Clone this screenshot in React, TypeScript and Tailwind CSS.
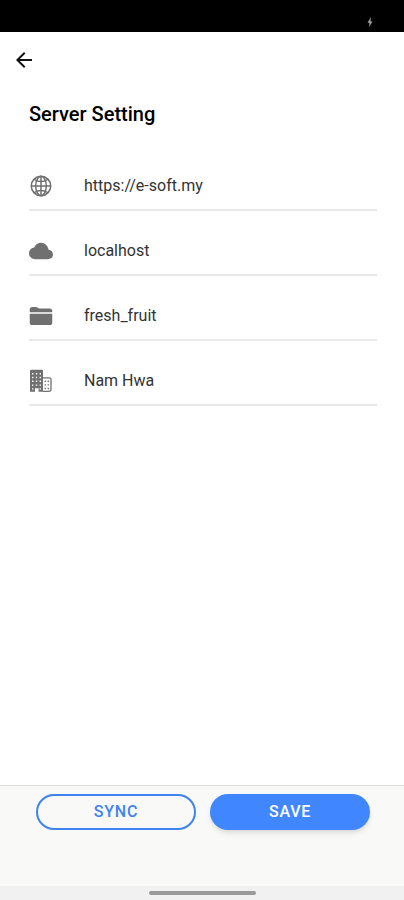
import type { ReactNode } from "react";
import { MdArrowBack } from "react-icons/md";
import { IoCloud, IoFolder, IoGlobeOutline } from "react-icons/io5";

function BusinessIcon() {
  return (
    <svg viewBox="0 0 24 24" className="size-6" fill="currentColor" aria-hidden="true">
      <path
        fillRule="evenodd"
        d="M2.2.8h10.6A1.2 1.2 0 0 1 14 2v20.8H9.6v-3.6H6v3.6H1V2A1.2 1.2 0 0 1 2.200.8ZM3 4v1.4h1.4V4Zm3.800 0v1.4h1.400V4Zm3.800 0v1.400H12V4ZM3 7.800v1.400h1.400V7.800Zm3.800 0v1.400h1.400V7.800Zm3.800 0v1.400H12V7.800ZM3 11.600V13h1.400v-1.400Zm3.800 0V13h1.400v-1.400Zm3.800 0V13H12v-1.400ZM3 15.400v1.400h1.400v-1.400Zm3.800 0v1.400h1.400v-1.400Zm3.800 0v1.400H12v-1.400ZM3 19.200v1.400h1.400v-1.400Zm7.600 0v1.400H12v-1.400Z"
      />
      <path
        d="M14 8.800h6.200a1.800 1.800 0 0 1 1.800 1.800v10a1.800 1.800 0 0 1-1.800 1.800H14"
        fill="none"
        stroke="currentColor"
        strokeWidth="1.3"
      />
      <path d="M15.600 11.600H17V13h-1.400Zm3 0H20V13h-1.400Zm-3 3.600H17v1.400h-1.400Zm3 0H20v1.400h-1.400Zm-3 3.600H17v1.400h-1.400Zm3 0H20v1.400h-1.400Z" />
    </svg>
  );
}

type FieldProps = { id: string; label: string; value: string; icon: ReactNode };

const fields: FieldProps[] = [
  { id: "url", label: "Server URL", value: "https://e-soft.my", icon: <IoGlobeOutline className="size-6" /> },
  { id: "host", label: "Host", value: "localhost", icon: <IoCloud className="size-6" /> },
  { id: "database", label: "Database", value: "fresh_fruit", icon: <IoFolder className="size-6" /> },
  { id: "company", label: "Company", value: "Nam Hwa", icon: <BusinessIcon /> },
];

function Field({ id, label, value, icon }: FieldProps) {
  return (
    <div className="flex h-[65px] items-center border-b-2 border-[#e9e9e9] pt-4">
      <label htmlFor={id} aria-label={label} className="flex w-[55px] shrink-0 text-[#707070]">
        {icon}
      </label>
      <input
        id={id}
        type="text"
        defaultValue={value}
        className="h-6 min-w-0 flex-1 bg-transparent text-base leading-6 text-[#333] outline-none"
      />
    </div>
  );
}

export default function App() {
  return (
    <div className="flex min-h-screen flex-col bg-white font-['Roboto',sans-serif]">
      <div className="flex h-8 items-end justify-end bg-black px-7 pb-1">
        <svg viewBox="0 0 12 12" className="size-3" fill="#a3a3a3" aria-hidden="true">
          <path d="M7 1 3.5 6.8h2L5 11l3.500-5.600h-2Z" />
        </svg>
      </div>
      <header className="flex h-14 items-center px-3">
        <button type="button" aria-label="Back" className="flex text-[#111]">
          <MdArrowBack className="size-6" />
        </button>
      </header>
      <main className="flex-1 pr-[27px] pl-[29px]">
        <h1 className="mt-2.5 mb-4 text-xl leading-8 font-medium text-black">Server Setting</h1>
        <form>
          {fields.map((field) => (
            <Field key={field.id} {...field} />
          ))}
        </form>
      </main>
      <footer>
        <div className="grid h-[101px] grid-cols-2 items-start gap-[14px] border-t border-[#dcdcdc] bg-[#f9f9f8] pt-2 pr-[34px] pl-9">
          <button
            type="button"
            className="h-9 rounded-full border-2 border-[#3f83f2] text-base font-medium tracking-wider text-[#3f83f2]"
          >
            SYNC
          </button>
          <button
            type="button"
            className="h-9 rounded-full bg-[#4087ff] text-base font-medium tracking-wider text-white shadow-md"
          >
            SAVE
          </button>
        </div>
        <div className="flex h-[14px] items-center justify-center bg-[#f1f1f1]">
          <div className="h-1 w-[107px] rounded-full bg-[#9a9a9a]" />
        </div>
      </footer>
    </div>
  );
}
